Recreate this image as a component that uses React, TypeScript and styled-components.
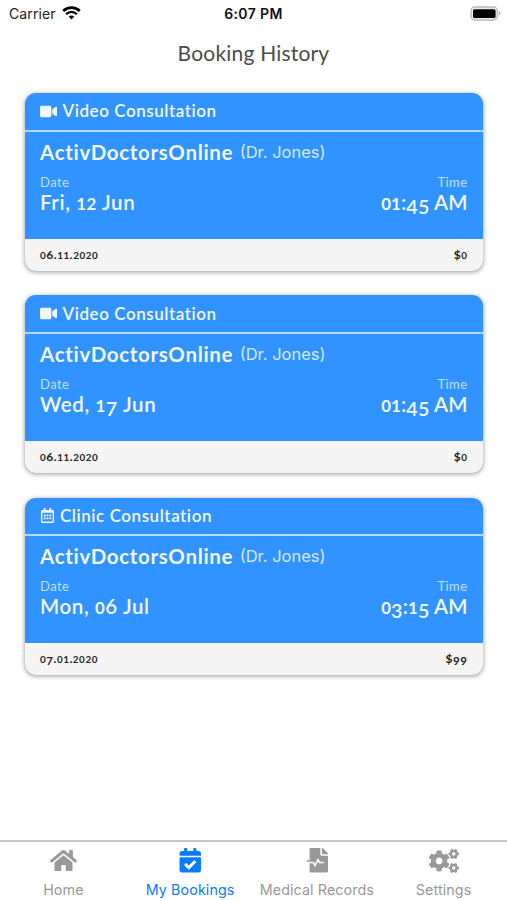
import React from "react";
import styled, { createGlobalStyle } from "styled-components";
import {
  FaCalendarCheck,
  FaCogs,
  FaFileMedicalAlt,
  FaHome,
  FaRegCalendarAlt,
  FaVideo,
} from "react-icons/fa";

const GlobalStyle = createGlobalStyle`
  * { box-sizing: border-box; }
  body { margin: 0; background: #fff; }
`;

const Screen = styled.div`
  width: 507px;
  height: 900px;
  display: flex;
  flex-direction: column;
  overflow: hidden;
  background: #fff;
  font-family: Lato, "Open Sans", sans-serif;
  white-space: nowrap;
`;

const StatusBar = styled.header`
  height: 28px;
  padding: 0 6px 0 9px;
  display: grid;
  grid-template-columns: 1fr auto 1fr;
  align-items: center;
  font-family: Inter, sans-serif;
  font-size: 14px;
  line-height: 28px;
  color: #222;
`;

const Carrier = styled.div`
  display: flex;
  align-items: center;
  gap: 6px;
  letter-spacing: 0.1px;

  svg {
    margin-top: -2px;
  }
`;

const Clock = styled.div`
  margin-right: 3px;
  font-weight: 600;
  color: #111;
  letter-spacing: 0.4px;
`;

const BatterySlot = styled.div`
  display: flex;
  justify-content: flex-end;
  margin-top: -2px;
`;

const Title = styled.h1`
  margin: 0;
  height: 50px;
  text-align: center;
  font-size: 21px;
  font-weight: 400;
  line-height: 49px;
  letter-spacing: 0.2px;
  color: #4c4c4c;
`;

const CardList = styled.main`
  flex: 1;
  padding: 15px 24.5px 0 25px;
  display: flex;
  flex-direction: column;
  gap: 24.5px;
`;

const Card = styled.article`
  height: 177.8px;
  flex: none;
  display: flex;
  flex-direction: column;
  border-radius: 11px;
  overflow: hidden;
  background: #3193ff;
  box-shadow: 0 1px 5px rgba(0, 0, 0, 0.42);
`;

const CardHeader = styled.div`
  height: 38.5px;
  flex: none;
  padding: 0 15px;
  display: flex;
  align-items: center;
  border-bottom: 2px solid #b5d8ff;
  color: #f2f8ff;
`;

const KindIcon = styled.span<{ $gap: number }>`
  display: flex;
  margin-right: ${(p) => p.$gap}px;
`;

const Kind = styled.span`
  font-size: 17px;
  font-weight: 600;
  line-height: 36px;
  letter-spacing: 0.55px;
`;

const CardBody = styled.div`
  flex: 1;
  padding: 5px 15px 0;
  color: #f2f8ff;
`;

const Provider = styled.div`
  height: 30px;
  display: flex;
  align-items: center;
  gap: 6.5px;
  line-height: 30px;
`;

const ProviderName = styled.span`
  font-size: 20.5px;
  font-weight: 700;
  letter-spacing: 0.68px;
`;

const Doctor = styled.span`
  font-family: Inter, sans-serif;
  font-size: 16.5px;
  color: #d8eaff;
`;

const Schedule = styled.div`
  margin-top: 7px;
  display: flex;
  justify-content: space-between;
`;

const Slot = styled.div<{ $end?: boolean }>`
  display: flex;
  flex-direction: column;
  align-items: ${(p) => (p.$end ? "flex-end" : "flex-start")};
`;

const SlotLabel = styled.span`
  font-size: 13px;
  line-height: 16px;
  letter-spacing: 0.45px;
  color: #c4e0ff;
`;

const SlotValue = styled.span<{ $tracking: number }>`
  font-size: 20.5px;
  font-weight: 600;
  line-height: 24px;
  letter-spacing: ${(p) => p.$tracking}px;
  margin-right: ${(p) => -p.$tracking}px;
`;

const CardFooter = styled.div`
  height: 32px;
  flex: none;
  padding: 0 15px;
  display: flex;
  align-items: center;
  justify-content: space-between;
  background: #f5f5f5;
  color: #222;
  font-size: 12px;
  font-weight: 700;
  line-height: 32px;
  letter-spacing: 0.55px;
`;

const SmallDigit = styled.span`
  font-size: 0.82em;
  font-weight: 700;
  line-height: 0;
`;

const LowDigit = styled.span`
  font-size: 0.96em;
  line-height: 0;
  vertical-align: -0.18em;
`;

const TabBar = styled.nav`
  height: 60.5px;
  flex: none;
  display: grid;
  grid-template-columns: repeat(4, 1fr);
  border-top: 2px solid #c6c6c6;
`;

const Tab = styled.div<{ $active?: boolean }>`
  display: flex;
  flex-direction: column;
  align-items: center;
  color: ${(p) => (p.$active ? "#087cff" : "#999")};
`;

const TabIcon = styled.span`
  height: 38px;
  display: flex;
  align-items: center;
`;

const TabLabel = styled.span`
  font-family: Inter, sans-serif;
  font-size: 14.3px;
  line-height: 20px;
  letter-spacing: 0.1px;
`;

/* Sets digits in the old-style manner: 0-2 at x-height, 3, 4, 5, 7 and 9 below the baseline. */
function Numerals({ text }: { text: string }) {
  return (
    <span>
      {text.split("").map((ch, i) => {
        if (/[012]/.test(ch)) return <SmallDigit key={i}>{ch}</SmallDigit>;
        if (/[34579]/.test(ch)) return <LowDigit key={i}>{ch}</LowDigit>;
        return ch;
      })}
    </span>
  );
}

function WifiIcon() {
  return (
    <svg width="19" height="14" viewBox="0 0 19 14" fill="none" stroke="#000">
      <path d="M1.2 4.9C6 .4 13 .4 17.8 4.9" strokeWidth="2.7" />
      <path d="M4.1 8.1c3.2-2.9 7.6-2.9 10.8 0" strokeWidth="2.5" />
      <path d="M6.7 10.6c1.6-1.5 4-1.5 5.6 0L9.5 13.5z" fill="#000" stroke="none" />
    </svg>
  );
}

function BatteryIcon() {
  return (
    <svg width="31" height="15" viewBox="0 0 31 15">
      <rect x="1" y="1" width="26.4" height="13" rx="4" fill="#eee" stroke="#bbb" strokeWidth="1.4" />
      <rect x="3" y="3.2" width="22.6" height="8.8" rx="1.6" fill="#000" />
      <path d="M28.8 5.2c2 .8 2 3.6 0 4.4z" fill="#aaa" />
    </svg>
  );
}

type Booking = { kind: "Video" | "Clinic"; date: string; time: string; booked: string; price: string };

const bookings: Booking[] = [
  { kind: "Video", date: "Fri, 12 Jun", time: "01:45 AM", booked: "06.11.2020", price: "$0" },
  { kind: "Video", date: "Wed, 17 Jun", time: "01:45 AM", booked: "06.11.2020", price: "$0" },
  { kind: "Clinic", date: "Mon, 06 Jul", time: "03:15 AM", booked: "07.01.2020", price: "$99" },
];

function BookingCard({ booking }: { booking: Booking }) {
  const video = booking.kind === "Video";
  return (
    <Card>
      <CardHeader>
        <KindIcon $gap={video ? 5.5 : 5}>
          {video ? <FaVideo size={17} /> : <FaRegCalendarAlt size={15} />}
        </KindIcon>
        <Kind>{booking.kind} Consultation</Kind>
      </CardHeader>
      <CardBody>
        <Provider>
          <ProviderName>ActivDoctorsOnline</ProviderName>
          <Doctor>(Dr. Jones)</Doctor>
        </Provider>
        <Schedule>
          <Slot>
            <SlotLabel>Date</SlotLabel>
            <SlotValue $tracking={0.6}><Numerals text={booking.date} /></SlotValue>
          </Slot>
          <Slot $end>
            <SlotLabel>Time</SlotLabel>
            <SlotValue $tracking={0.15}><Numerals text={booking.time} /></SlotValue>
          </Slot>
        </Schedule>
      </CardBody>
      <CardFooter>
        <Numerals text={booking.booked} />
        <Numerals text={booking.price} />
      </CardFooter>
    </Card>
  );
}

export default function App() {
  return (
    <>
      <GlobalStyle />
      <Screen>
        <StatusBar>
          <Carrier>Carrier <WifiIcon /></Carrier>
          <Clock>6:07 PM</Clock>
          <BatterySlot><BatteryIcon /></BatterySlot>
        </StatusBar>
        <Title>Booking History</Title>
        <CardList>
          {bookings.map((b) => <BookingCard key={b.date} booking={b} />)}
        </CardList>
        <TabBar>
          <Tab><TabIcon><FaHome size={27} /></TabIcon><TabLabel>Home</TabLabel></Tab>
          <Tab $active><TabIcon><FaCalendarCheck size={24.5} /></TabIcon><TabLabel>My Bookings</TabLabel></Tab>
          <Tab><TabIcon><FaFileMedicalAlt size={24.5} /></TabIcon><TabLabel>Medical Records</TabLabel></Tab>
          <Tab><TabIcon><FaCogs size={30} /></TabIcon><TabLabel>Settings</TabLabel></Tab>
        </TabBar>
      </Screen>
    </>
  );
}
